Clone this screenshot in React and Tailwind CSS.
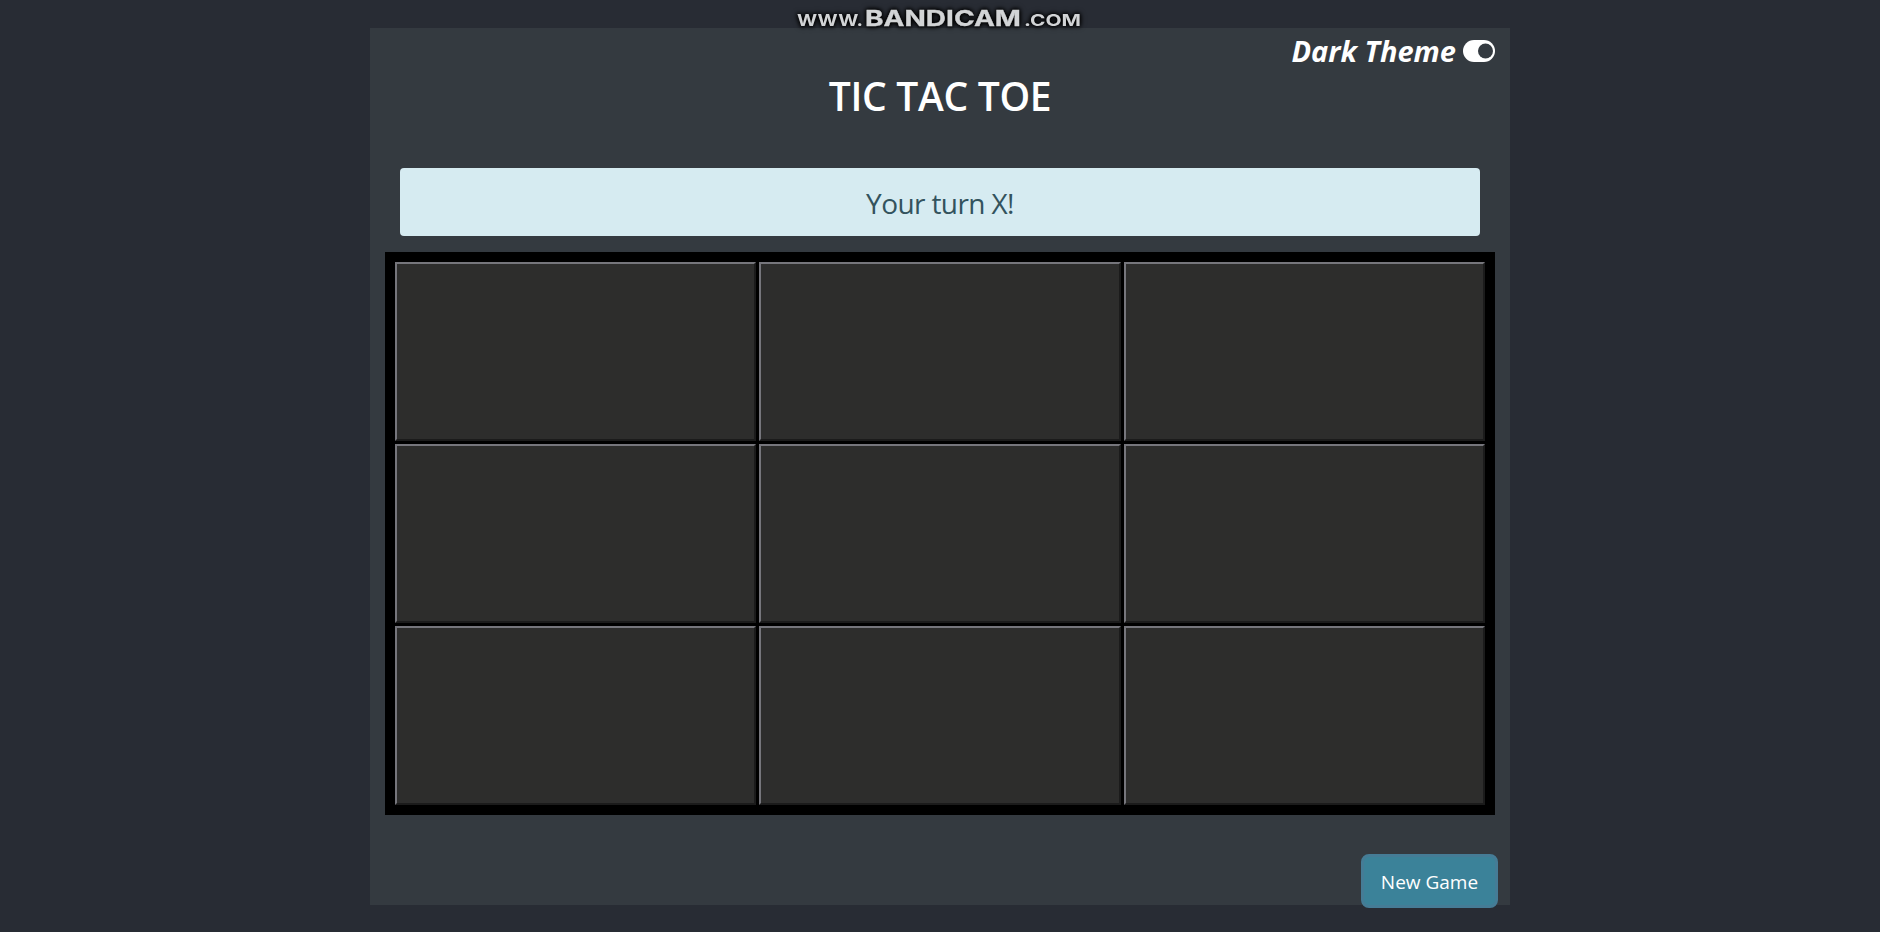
const CELLS = Array.from({ length: 9 }, (_, i) => i);

function Toggle() {
  return (
    <svg viewBox="0 0 32 22" className="h-[22px] w-8" aria-hidden="true">
      <rect width="32" height="22" rx="11" fill="#fff" />
      <circle cx="22.500" cy="11" r="7.500" fill="#343a40" />
    </svg>
  );
}

function Watermark() {
  return (
    <div className="absolute left-[792px] top-0 h-9 w-[296px]">
      <svg viewBox="0 0 296 36" className="h-9 w-[296px] [filter:drop-shadow(0_0_2px_#000)_drop-shadow(0_0_2px_#000)]">
        <g fill="#d2d4d6" stroke="#d2d4d6" fontFamily="Inter, sans-serif" fontWeight="700">
          <text x="5" y="25.500" fontSize="16" strokeWidth="0" textLength="66" lengthAdjust="spacingAndGlyphs">WWW.</text>
          <text x="73" y="25.500" fontSize="22" strokeWidth="0.300" textLength="156" lengthAdjust="spacingAndGlyphs">BANDICAM</text>
          <text x="232" y="25.500" fontSize="16" strokeWidth="0" textLength="57" lengthAdjust="spacingAndGlyphs">.COM</text>
        </g>
      </svg>
    </div>
  );
}

export default function App() {
  return (
    <div className="relative h-[932px] w-full overflow-hidden bg-[#282c34] pt-7 font-['Open_Sans','Noto_Sans',sans-serif]">
      <main className="mx-auto h-[877px] w-[1140px] bg-[#343a40] px-[15px]">
        <div className="flex h-[46px] items-center justify-end gap-[7px]">
          <span className="-mt-0.5 text-[29px] leading-none font-bold text-white italic">Dark Theme</span>
          <Toggle />
        </div>
        <h1 className="flex h-[42px] items-center justify-center text-[39px] leading-none font-semibold tracking-[-0.3px] text-white">TIC TAC TOE</h1>
        <div className="mx-[15px] mt-[52px] flex h-[68px] items-center justify-center rounded-[4px] bg-[#d6ebf1] pt-0.5 text-[28px] leading-none tracking-[-0.6px] text-[#33535d]">Your turn X!</div>
        <div className="mt-4 grid h-[563px] grid-cols-3 grid-rows-3 gap-[3px] border-10 border-black bg-black">
          {CELLS.map((i) => (
            <button key={i} aria-label={`Cell ${i + 1}`} className="border-2 border-t-[#76767c] border-r-[#1b1b1b] border-b-[#1b1b1b] border-l-[#76767c] bg-[#2d2d2c]" />
          ))}
        </div>
        <div className="-mr-[3px] mt-[39px] flex justify-end">
          <button className="h-[54px] w-[137px] rounded-lg border-3 border-[#457c96] bg-[#3b8299] pt-0.5 text-[19px] leading-none text-white">New Game</button>
        </div>
      </main>
      <Watermark />
    </div>
  );
}
